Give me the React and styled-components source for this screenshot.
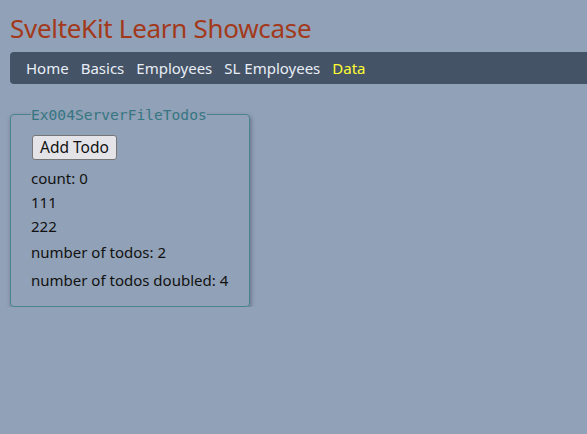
import React, { useState } from 'react';
import styled, { createGlobalStyle } from 'styled-components';

const GlobalStyle = createGlobalStyle`
  html, body {
    margin: 0;
    padding: 0;
    background: #91a1b7;
  }
  body {
    font-family: "Noto Sans", "Open Sans", sans-serif;
    color: #111;
  }
`;

const Page = styled.div`
  padding: 0 0 0 10px;
`;

const Title = styled.h1`
  margin: 0;
  padding: 10px 0 0 0;
  height: 42px;
  font-size: 26px;
  font-weight: 400;
  color: #a3391b;
  letter-spacing: -0.3px;
`;

const Nav = styled.nav`
  display: flex;
  align-items: center;
  gap: 12px;
  height: 32px;
  padding: 0 16px;
  background: #455366;
  border-radius: 4px 0 0 4px;
`;

const NavLink = styled.a`
  font-size: 15px;
  color: ${({ active }) => (active ? '#ffff33' : '#e8eef6')};
  text-decoration: none;
  cursor: pointer;
`;

const Box = styled.fieldset`
  margin: 22px 0 0 0;
  width: 240px;
  box-sizing: border-box;
  padding: 8px 20px 12px 20px;
  border: 1px solid #4b8290;
  border-radius: 4px;
  box-shadow: 1px 2px 4px rgba(40, 50, 70, 0.45);
`;

const Legend = styled.legend`
  font-family: "DejaVu Sans Mono", "Liberation Mono", monospace;
  font-size: 14.6px;
  color: #367682;
  padding: 0;
  margin-left: 0;
`;

const Button = styled.button`
  font-family: "Noto Sans", "Open Sans", sans-serif;
  font-size: 15.5px;
  height: 25px;
  padding: 0 7px;
  margin: 4px 0 6px 1px;
  background: #e3e3e8;
  border: 1px solid #767676;
  border-radius: 3px;
  color: #111;
  line-height: 21px;
`;

const Line = styled.div`
  font-size: 15px;
  line-height: ${({ tall }) => (tall ? '28px' : '24px')};
`;

export default function App() {
  const [todos] = useState(['111', '222']);
  const [count] = useState(0);
  return (
    <Page>
      <GlobalStyle />
      <Title>SvelteKit Learn Showcase</Title>
      <Nav>
        <NavLink>Home</NavLink>
        <NavLink>Basics</NavLink>
        <NavLink>Employees</NavLink>
        <NavLink>SL Employees</NavLink>
        <NavLink active>Data</NavLink>
      </Nav>
      <Box>
        <Legend>Ex004ServerFileTodos</Legend>
        <Button>Add Todo</Button>
        <Line>count: {count}</Line>
        {todos.map((t) => (
          <Line key={t}>{t}</Line>
        ))}
        <Line tall>number of todos: {todos.length}</Line>
        <Line tall>number of todos doubled: {todos.length * 2}</Line>
      </Box>
    </Page>
  );
}
